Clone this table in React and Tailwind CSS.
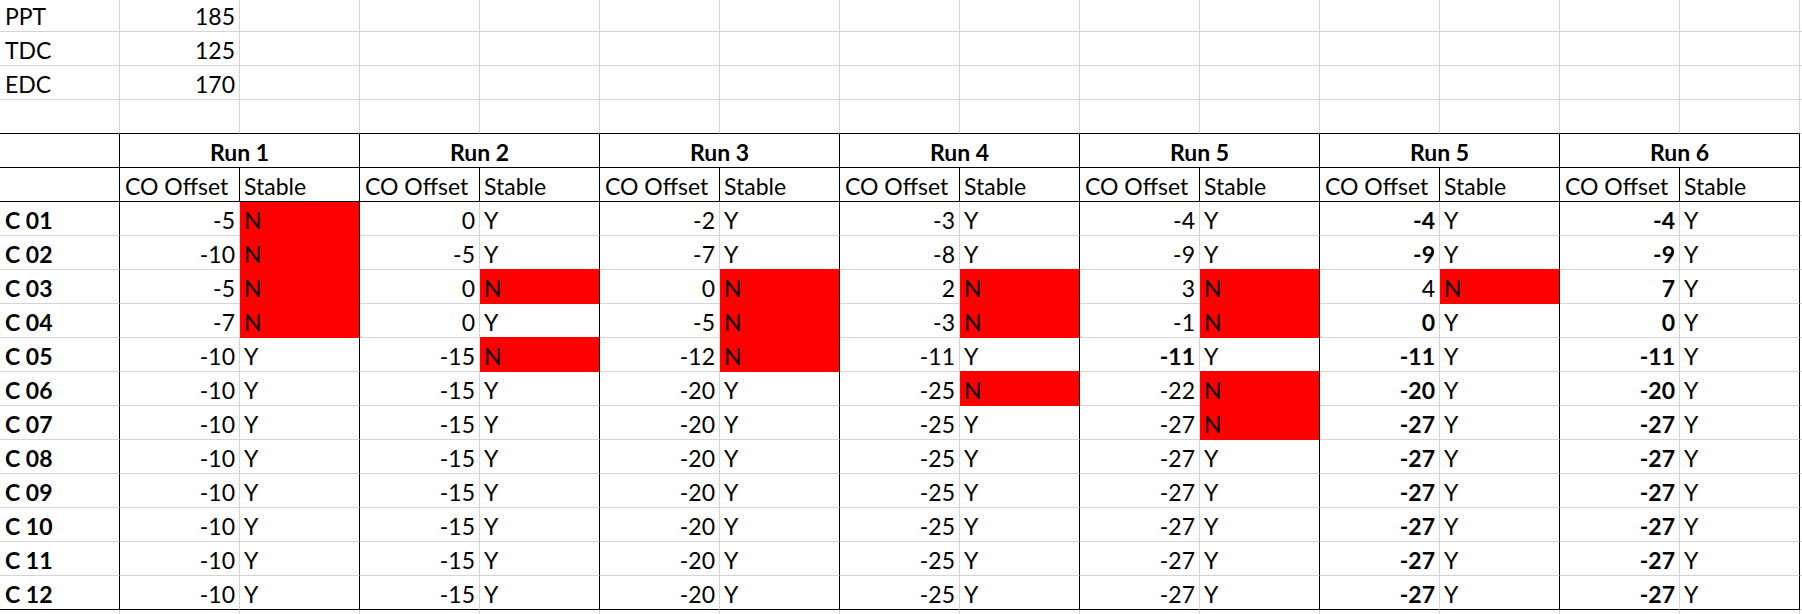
import React from "react";

const runs = [
  { title: "Run 1", co: [-5, -10, -5, -7, -10, -10, -10, -10, -10, -10, -10, -10], st: "NNNNYYYYYYYY", bold: [] },
  { title: "Run 2", co: [0, -5, 0, 0, -15, -15, -15, -15, -15, -15, -15, -15], st: "YYNYNYYYYYYY", bold: [] },
  { title: "Run 3", co: [-2, -7, 0, -5, -12, -20, -20, -20, -20, -20, -20, -20], st: "YYNNNYYYYYYY", bold: [] },
  { title: "Run 4", co: [-3, -8, 2, -3, -11, -25, -25, -25, -25, -25, -25, -25], st: "YYNNYNYYYYYY", bold: [] },
  { title: "Run 5", co: [-4, -9, 3, -1, -11, -22, -27, -27, -27, -27, -27, -27], st: "YYNNYNNYYYYY", bold: [4] },
  { title: "Run 5", co: [-4, -9, 4, 0, -11, -20, -27, -27, -27, -27, -27, -27], st: "YYNYYYYYYYYY", bold: [0, 1, 3, 4, 5, 6, 7, 8, 9, 10, 11] },
  { title: "Run 6", co: [-4, -9, 7, 0, -11, -20, -27, -27, -27, -27, -27, -27], st: "YYYYYYYYYYYY", bold: [0, 1, 2, 3, 4, 5, 6, 7, 8, 9, 10, 11] },
];

const labels = ["C 01", "C 02", "C 03", "C 04", "C 05", "C 06", "C 07", "C 08", "C 09", "C 10", "C 11", "C 12"];

const R_GRAY = "border-r-[#d4d4d4]";
const R_BLACK = "border-r-black";
const B_GRAY = "border-b-[#d4d4d4]";
const B_BLACK = "border-b-black";
const B_RED = "border-b-[#ff0000]";

const Cell = ({ w = "w-[120px]", r = R_GRAY, b = B_GRAY, extra = "", children }) => (
  <div className={`shrink-0 ${w} h-full border-r border-b ${r} ${b} flex items-end pb-[3px] leading-none whitespace-nowrap ${extra}`}>
    {children}
  </div>
);

const TopRow = ({ h = "h-[34px]", label, value, bottom = B_GRAY }) => (
  <div className={`flex ${h}`}>
    <Cell b={bottom} extra="pl-[5px]">{label}</Cell>
    <Cell b={bottom} extra="justify-end pr-[4px]">{value}</Cell>
    {Array.from({ length: 13 }).map((_, i) => (
      <Cell key={i} b={bottom} />
    ))}
    <Cell />
  </div>
);

export default function App() {
  return (
    <div className="w-[1802px] h-[614px] overflow-hidden bg-white text-black text-[23px] font-['Lato',sans-serif]">
      <TopRow h="h-[32px]" label="PPT" value="185" />
      <TopRow label="TDC" value="125" />
      <TopRow label="EDC" value="170" />
      <TopRow bottom={B_BLACK} />

      {/* run headers */}
      <div className="flex h-[34px]">
        <Cell r={R_BLACK} b={B_BLACK} />
        {runs.map((run, i) => (
          <Cell key={i} w="w-[240px]" r={R_BLACK} b={B_BLACK} extra="justify-center font-bold">
            {run.title}
          </Cell>
        ))}
        <Cell />
      </div>

      {/* sub headers */}
      <div className="flex h-[34px]">
        <Cell r={R_BLACK} b={B_BLACK} />
        {runs.map((run, i) => (
          <React.Fragment key={i}>
            <Cell r={R_BLACK} b={B_BLACK} extra="pl-[5px]">CO Offset</Cell>
            <Cell r={R_BLACK} b={B_BLACK} extra="pl-[4px]">Stable</Cell>
          </React.Fragment>
        ))}
        <Cell />
      </div>

      {labels.map((label, row) => {
        const last = row === labels.length - 1;
        return (
          <div key={label} className="flex h-[34px]">
            <Cell r={R_BLACK} b={last ? B_BLACK : B_GRAY} extra="pl-[5px] font-bold">
              {label}
            </Cell>
            {runs.map((run, i) => {
              const red = run.st[row] === "N";
              const nextRed = !last && run.st[row + 1] === "N";
              const stBottom = last ? B_BLACK : red || nextRed ? B_RED : B_GRAY;
              return (
                <React.Fragment key={i}>
                  <Cell
                    b={last ? B_BLACK : B_GRAY}
                    extra={`justify-end pr-[4px] ${run.bold.includes(row) ? "font-bold" : ""}`}
                  >
                    {run.co[row]}
                  </Cell>
                  <Cell r={R_BLACK} b={stBottom} extra={`pl-[4px] ${red ? "bg-[#ff0000]" : ""}`}>
                    {run.st[row]}
                  </Cell>
                </React.Fragment>
              );
            })}
            <Cell />
          </div>
        );
      })}

      <TopRow />
    </div>
  );
}
